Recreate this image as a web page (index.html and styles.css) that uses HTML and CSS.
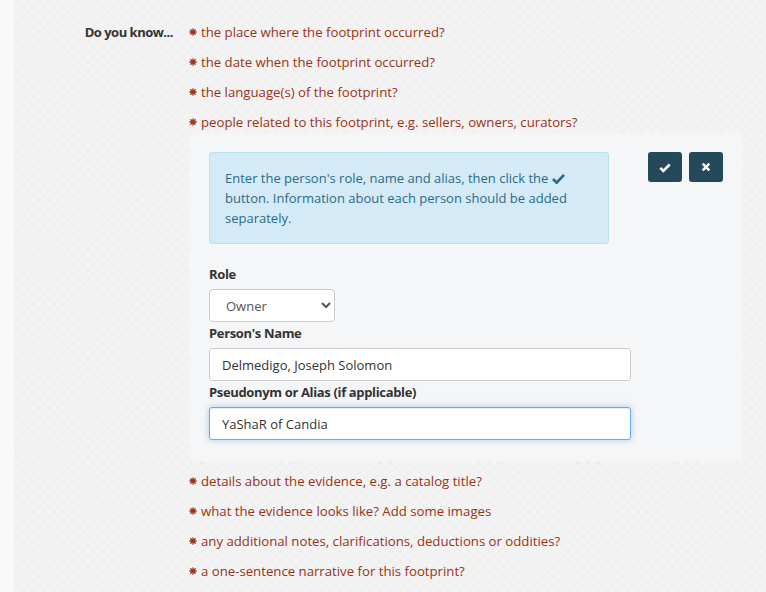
FILE: index.html
```html
<!DOCTYPE html>
<html lang="en">
<head>
<meta charset="utf-8">
<title>Footprint</title>
<link rel="stylesheet" href="styles.css">
</head>
<body>
<div class="page">
  <div class="row">
    <div class="label">Do you know...</div>
    <div class="content">
      <ul class="asks">
        <li><svg class="burst" viewBox="0 0 10 10"><g stroke="currentColor" stroke-width="1.6" stroke-linecap="round"><line x1="5" y1="1" x2="5" y2="9"/><line x1="1" y1="5" x2="9" y2="5"/><line x1="2.2" y1="2.2" x2="7.8" y2="7.8"/><line x1="7.8" y1="2.2" x2="2.2" y2="7.8"/></g><circle cx="5" cy="5" r="2.2" fill="currentColor"/></svg>the place where the footprint occurred?</li>
        <li><svg class="burst" viewBox="0 0 10 10"><g stroke="currentColor" stroke-width="1.6" stroke-linecap="round"><line x1="5" y1="1" x2="5" y2="9"/><line x1="1" y1="5" x2="9" y2="5"/><line x1="2.2" y1="2.2" x2="7.8" y2="7.8"/><line x1="7.8" y1="2.2" x2="2.2" y2="7.8"/></g><circle cx="5" cy="5" r="2.2" fill="currentColor"/></svg>the date when the footprint occurred?</li>
        <li><svg class="burst" viewBox="0 0 10 10"><g stroke="currentColor" stroke-width="1.6" stroke-linecap="round"><line x1="5" y1="1" x2="5" y2="9"/><line x1="1" y1="5" x2="9" y2="5"/><line x1="2.2" y1="2.2" x2="7.8" y2="7.8"/><line x1="7.8" y1="2.2" x2="2.2" y2="7.8"/></g><circle cx="5" cy="5" r="2.2" fill="currentColor"/></svg>the language(s) of the footprint?</li>
        <li><svg class="burst" viewBox="0 0 10 10"><g stroke="currentColor" stroke-width="1.6" stroke-linecap="round"><line x1="5" y1="1" x2="5" y2="9"/><line x1="1" y1="5" x2="9" y2="5"/><line x1="2.2" y1="2.2" x2="7.8" y2="7.8"/><line x1="7.8" y1="2.2" x2="2.2" y2="7.8"/></g><circle cx="5" cy="5" r="2.2" fill="currentColor"/></svg>people related to this footprint, e.g. sellers, owners, curators?</li>
      </ul>

      <div class="panel">
        <div class="panel-top">
          <div class="info">Enter the person's role, name and alias, then click the <svg class="inline-check" viewBox="0 0 14 12"><path d="M1 6.5 L5 10.5 L13 2" fill="none" stroke="currentColor" stroke-width="3" stroke-linejoin="miter"/></svg> button. Information about each person should be added separately.</div>
          <div class="actions">
            <button class="btn" type="button"><svg viewBox="0 0 14 12" class="ico"><path d="M1.5 6.5 L5 10 L12.5 2.5" fill="none" stroke="#fff" stroke-width="3"/></svg></button>
            <button class="btn" type="button"><svg viewBox="0 0 12 12" class="ico ico-x"><path d="M2 2 L10 10 M10 2 L2 10" fill="none" stroke="#fff" stroke-width="3"/></svg></button>
          </div>
        </div>

        <div class="field">
          <label class="flabel">Role</label>
          <select class="select"><option>Owner</option></select>
        </div>
        <div class="field">
          <label class="flabel">Person's Name</label>
          <input class="input" type="text" value="Delmedigo, Joseph Solomon">
        </div>
        <div class="field">
          <label class="flabel">Pseudonym or Alias (if applicable)</label>
          <input class="input focused" type="text" value="YaShaR of Candia">
        </div>
      </div>

      <ul class="asks">
        <li><svg class="burst" viewBox="0 0 10 10"><g stroke="currentColor" stroke-width="1.6" stroke-linecap="round"><line x1="5" y1="1" x2="5" y2="9"/><line x1="1" y1="5" x2="9" y2="5"/><line x1="2.2" y1="2.2" x2="7.8" y2="7.8"/><line x1="7.8" y1="2.2" x2="2.2" y2="7.8"/></g><circle cx="5" cy="5" r="2.2" fill="currentColor"/></svg>details about the evidence, e.g. a catalog title?</li>
        <li><svg class="burst" viewBox="0 0 10 10"><g stroke="currentColor" stroke-width="1.6" stroke-linecap="round"><line x1="5" y1="1" x2="5" y2="9"/><line x1="1" y1="5" x2="9" y2="5"/><line x1="2.2" y1="2.2" x2="7.8" y2="7.8"/><line x1="7.8" y1="2.2" x2="2.2" y2="7.8"/></g><circle cx="5" cy="5" r="2.2" fill="currentColor"/></svg>what the evidence looks like? Add some images</li>
        <li><svg class="burst" viewBox="0 0 10 10"><g stroke="currentColor" stroke-width="1.6" stroke-linecap="round"><line x1="5" y1="1" x2="5" y2="9"/><line x1="1" y1="5" x2="9" y2="5"/><line x1="2.2" y1="2.2" x2="7.8" y2="7.8"/><line x1="7.8" y1="2.2" x2="2.2" y2="7.8"/></g><circle cx="5" cy="5" r="2.2" fill="currentColor"/></svg>any additional notes, clarifications, deductions or oddities?</li>
        <li><svg class="burst" viewBox="0 0 10 10"><g stroke="currentColor" stroke-width="1.6" stroke-linecap="round"><line x1="5" y1="1" x2="5" y2="9"/><line x1="1" y1="5" x2="9" y2="5"/><line x1="2.2" y1="2.2" x2="7.8" y2="7.8"/><line x1="7.8" y1="2.2" x2="2.2" y2="7.8"/></g><circle cx="5" cy="5" r="2.2" fill="currentColor"/></svg>a one-sentence narrative for this footprint?</li>
      </ul>
    </div>
  </div>
</div>
</body>
</html>
```

FILE: styles.css
```css
html, body {
  margin: 0;
  padding: 0;
}
body {
  background: #f9f9f9;
  font-family: "Open Sans", "Liberation Sans", sans-serif;
  font-size: 13px;
  color: #333;
  height: 592px;
  overflow: hidden;
}
.page {
  margin-left: 14px;
  min-height: 592px;
  padding-top: 22px;
  box-sizing: border-box;
  background-color: #f3f3f3;
  background-image:
    repeating-linear-gradient(45deg, rgba(0,0,0,0.016) 0 1px, transparent 1px 7px),
    repeating-linear-gradient(-45deg, rgba(0,0,0,0.016) 0 1px, transparent 1px 7px);
}
.row {
  display: grid;
  grid-template-columns: 163px 1fr;
  column-gap: 12px;
}
.label {
  text-align: right;
  font-weight: 700;
  line-height: 20px;
  padding-right: 4px;
  letter-spacing: -0.5px;
  color: #333;
}
.content {
  width: 554px;
}
.asks {
  list-style: none;
  margin: 0;
  padding: 0;
}
.asks li {
  display: flex;
  align-items: center;
  line-height: 20px;
  height: 20px;
  margin-bottom: 10px;
  color: #9a3216;
  white-space: nowrap;
  font-size: 13.2px;
}
.asks li:last-child {
  margin-bottom: 0;
}
.burst {
  width: 8px;
  height: 8px;
  margin-right: 4px;
  flex: none;
}
.panel {
  background: #f5f6f7;
  border-radius: 6px;
  padding: 19px 20px 20px 20px;
  margin: 1px 0 10px 0;
}
.panel-top {
  display: flex;
  justify-content: space-between;
  align-items: flex-start;
  margin-bottom: 20px;
}
.info {
  width: 400px;
  box-sizing: border-box;
  padding: 15px;
  background: #d4eaf6;
  border: 1px solid #b7e1ef;
  border-radius: 3px;
  color: #2b6a86;
  line-height: 20px;
}
.inline-check {
  width: 13px;
  height: 11px;
  vertical-align: -1px;
}
.actions {
  display: flex;
  gap: 7px;
}
.btn {
  width: 34px;
  height: 30px;
  border: none;
  border-radius: 3px;
  background: #24495b;
  padding: 0;
  display: flex;
  align-items: center;
  justify-content: center;
}
.ico {
  width: 12px;
  height: 11px;
}
.ico-x {
  width: 10px;
  height: 10px;
}
.field {
  display: flex;
  flex-direction: column;
  align-items: flex-start;
}
.flabel {
  font-weight: 700;
  line-height: 20px;
  margin-bottom: 5px;
  letter-spacing: -0.35px;
  color: #333;
}
.select {
  width: 126px;
  height: 33px;
  padding: 0 8px 0 12px;
  font-family: inherit;
  font-size: 13px;
  color: #555;
  background: #fff;
  border: 1px solid #ccc;
  border-radius: 4px;
  margin-bottom: 1px;
}
.input {
  width: 422px;
  height: 33px;
  box-sizing: border-box;
  padding: 0 12px;
  font-family: inherit;
  font-size: 13px;
  color: #333;
  background: #fff;
  border: 1px solid #ccc;
  border-radius: 3px;
  margin-bottom: 1px;
}
.focused {
  border-color: #66afe9;
  outline: none;
  box-shadow: inset 0 1px 1px rgba(0,0,0,.075), 0 0 6px rgba(102,175,233,.6);
}
```
